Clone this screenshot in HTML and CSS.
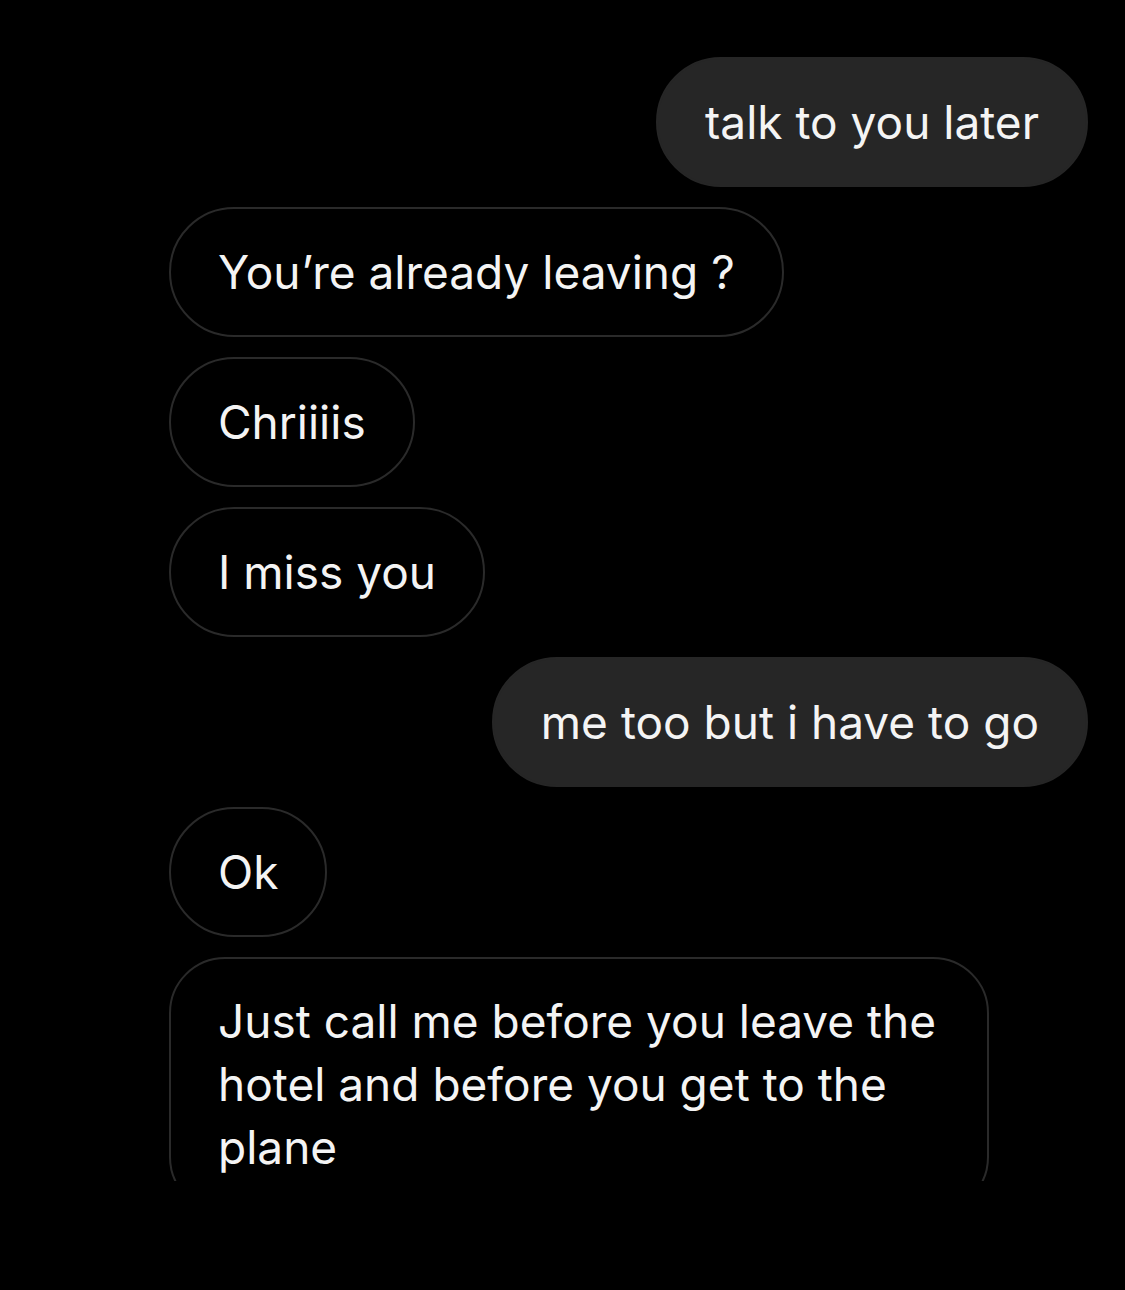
FILE: index.html
```html
<!DOCTYPE html>
<html lang="en">
<head>
<meta charset="utf-8">
<title>Chat</title>
<link rel="stylesheet" href="styles.css">
</head>
<body>
<div class="screen">
  <div class="chat">
    <div class="row sent"><div class="bubble">talk to you later</div></div>
    <div class="row recv"><div class="bubble">You’re already leaving ?</div></div>
    <div class="row recv"><div class="bubble">Chriiiis</div></div>
    <div class="row recv"><div class="bubble">I miss you</div></div>
    <div class="row sent"><div class="bubble">me too but i have to go</div></div>
    <div class="row recv"><div class="bubble">Ok</div></div>
    <div class="row recv"><div class="bubble multi">Just call me before you leave the hotel and before you get to the plane</div></div>
  </div>
</div>
</body>
</html>
```
FILE: styles.css
```css
html, body {
  margin: 0;
  padding: 0;
  background: #000;
}
.screen {
  width: 1125px;
  height: 1290px;
  background: #000;
  overflow: hidden;
}
.chat {
  box-sizing: border-box;
  height: 1181px;
  overflow: hidden;
  padding: 57px 37px 0 169px;
  display: flex;
  flex-direction: column;
  gap: 20px;
  font-family: Inter, "Noto Sans", sans-serif;
  font-size: 46px;
  color: #f4f4f4;
}
.row {
  display: flex;
  flex-shrink: 0;
}
.row.sent {
  justify-content: flex-end;
}
.row.recv {
  justify-content: flex-start;
}
.bubble {
  box-sizing: border-box;
  max-width: 820px;
  padding: 32px 47px;
  line-height: 62px;
  border-radius: 65px;
  border: 2px solid #2a2a2a;
}
.sent .bubble {
  background: #262626;
  border-color: #262626;
}
.recv .bubble {
  background: #000;
}
.bubble.multi {
  width: 820px;
  border-radius: 56px;
  line-height: 63px;
  padding-top: 31px;
}
```
